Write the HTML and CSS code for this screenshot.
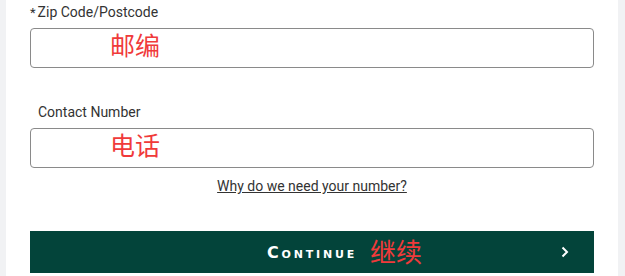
FILE: index.html
```html
<!DOCTYPE html>
<html lang="en">
<head>
  <meta charset="UTF-8" />
  <title>Contact details</title>
  <link rel="stylesheet" href="styles.css">
</head>
<body>
  <div class="panel">
    <div class="field">
      <label class="field-label"><span class="req">*</span>Zip Code/Postcode</label>
      <div class="text-box"><span class="note">邮编</span></div>
    </div>

    <div class="field field-gap">
      <label class="field-label label-indent">Contact Number</label>
      <div class="text-box"><span class="note">电话</span></div>
    </div>

    <div class="why-row">
      <a href="#" class="why-link">Why do we need your number?</a>
    </div>

    <button class="continue-btn">
      <span class="continue-text">Continue</span>
      <span class="note btn-note">继续</span>
      <svg class="chevron" width="8" height="12" viewBox="0 0 8 12">
        <path d="M1.5 1.5 L6 6 L1.5 10.5" fill="none" stroke="#fff" stroke-width="2"/>
      </svg>
    </button>
  </div>
</body>
</html>
```

FILE: styles.css
```css
body {
  margin: 0;
  padding: 0 7px 0 6px;
  background-color: #f1f2f4;
  font-family: 'Roboto', 'Liberation Sans', sans-serif;
  color: #333;
}

.panel {
  background-color: #fff;
  padding: 0 24px;
  height: 276px;
}

.field {
  display: flex;
  flex-direction: column;
  gap: 6px;
}

.field-gap {
  margin-top: 32px;
}

.field-label {
  font-size: 14px;
  line-height: 20px;
  height: 20px;
  padding-top: 2px;
  color: #333;
}

.req {
  font-size: 13px;
  line-height: 0;
  margin-right: 2px;
}

.label-indent {
  padding-left: 8px;
}

.text-box {
  height: 38px;
  border: 1px solid #8a8a8a;
  border-radius: 4px;
  display: flex;
  align-items: flex-start;
  padding-left: 79px;
}

.note {
  font-family: 'Noto Sans CJK SC', sans-serif;
  color: #f03a3a;
  font-size: 25px;
  line-height: 1;
}

.text-box .note {
  margin-top: 3px;
}

.why-row {
  margin-top: 8px;
  text-align: center;
  line-height: 20px;
}

.why-link {
  font-size: 14px;
  color: #333;
  text-decoration: underline;
}

.continue-btn {
  margin-top: 35px;
  width: 100%;
  height: 42px;
  border: none;
  background-color: #03443a;
  color: #fff;
  display: flex;
  align-items: center;
  justify-content: center;
  position: relative;
  cursor: pointer;
}

.continue-text {
  font-family: 'DejaVu Sans', sans-serif;
  font-variant: small-caps;
  font-weight: bold;
  font-size: 16px;
  letter-spacing: 2.8px;
}

.btn-note {
  position: absolute;
  left: 340px;
  top: 7px;
  font-size: 26px;
}

.chevron {
  position: absolute;
  right: 25px;
  top: 15px;
}
```
